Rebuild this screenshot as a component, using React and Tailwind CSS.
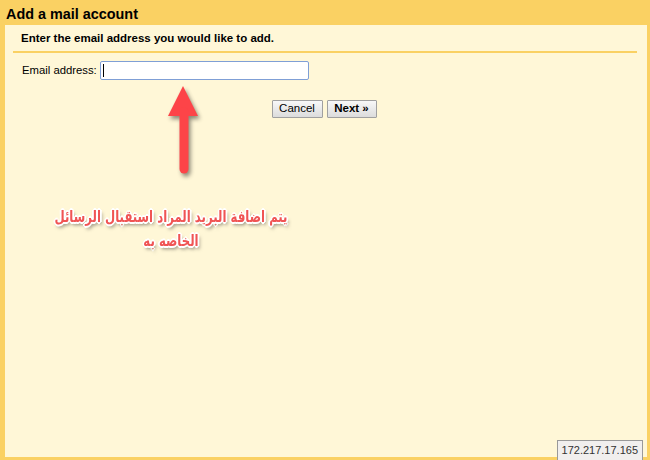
import React from 'react';

const arial = { fontFamily: '"Liberation Sans", Arial, sans-serif' };

function Arrow() {
  return (
    <svg
      className="absolute left-[160px] top-[80px]"
      width="50"
      height="105"
      viewBox="160 80 50 105"
      style={{ filter: 'drop-shadow(2px 3px 2px rgba(0,0,0,0.45))' }}
    >
      <polygon points="183,86 168,116 198,116" fill="#fd4448" />
      <line x1="184" y1="112" x2="184" y2="169" stroke="#fd4448" strokeWidth="9" strokeLinecap="round" />
    </svg>
  );
}

export default function App() {
  return (
    <div
      className="relative w-[650px] h-[460px] bg-[#fad163] pl-[5px] pr-[3px] pb-[3px] flex flex-col overflow-hidden"
      style={arial}
    >
      {/* Titre */}
      <div className="h-[25px] flex items-center">
        <h1 className="text-[14.4px] font-bold text-black leading-none pl-[1px] pt-[3px]">
          Add a mail account
        </h1>
      </div>

      {/* Corps */}
      <div className="flex-1 bg-[#fff7d7] flex flex-col">
        <div className="h-[26px] flex items-center pl-[16px] pt-[1px]">
          <p className="text-[11.5px] font-bold text-black">
            Enter the email address you would like to add.
          </p>
        </div>
        <div className="h-[2px] bg-[#fad163] ml-[8px] mr-[10px]" />

        <div className="flex items-center mt-[8px] pl-[17px] gap-[3px]">
          <label className="text-[11.3px] text-black">Email address:</label>
          <div className="w-[209px] h-[19px] bg-white border border-[#7f9fd6] rounded-[2px] flex items-center pl-[2px]">
            <span className="w-[1px] h-[13px] bg-black" />
          </div>
        </div>

        <div className="flex justify-center gap-[4px] mt-[20px] pr-[4px]">
          <button className="w-[51px] h-[18px] text-[11.5px] text-black border border-[#a0a0a0] rounded-[1px] bg-gradient-to-b from-[#f8f8f8] to-[#dcdcdc] leading-none">
            Cancel
          </button>
          <button className="w-[50px] h-[18px] text-[11.5px] font-bold text-black border border-[#a0a0a0] rounded-[1px] bg-gradient-to-b from-[#f8f8f8] to-[#dcdcdc] leading-none">
            Next »
          </button>
        </div>
      </div>

      {/* Annotation */}
      <Arrow />
      <div
        dir="rtl"
        className="absolute left-[20px] top-[205px] w-[302px] text-center text-[15.5px] font-bold leading-[24px] text-[#f05454] whitespace-nowrap scale-x-[0.84]"
        style={{
          fontFamily: '"DejaVu Sans Condensed", "DejaVu Sans", sans-serif',
          textShadow:
            '1px 1px 0 #fff, -1px -1px 0 #fff, 1px -1px 0 #fff, -1px 1px 0 #fff, 2px 0 0 #fff, -2px 0 0 #fff, 0 2px 0 #fff, 0 -2px 0 #fff, 2px 3px 4px rgba(0,0,0,0.5)',
        }}
      >
        يتم اضافة البريد المراد استقبال الرسائل
        <br />
        الخاصه به
      </div>

      {/* Adresse IP */}
      <div className="absolute right-[7px] bottom-0 h-[20px] px-[4px] bg-[#f1efee] border border-[#999] border-b-0 flex items-center text-[11px] text-[#333]">
        172.217.17.165
      </div>
    </div>
  );
}
